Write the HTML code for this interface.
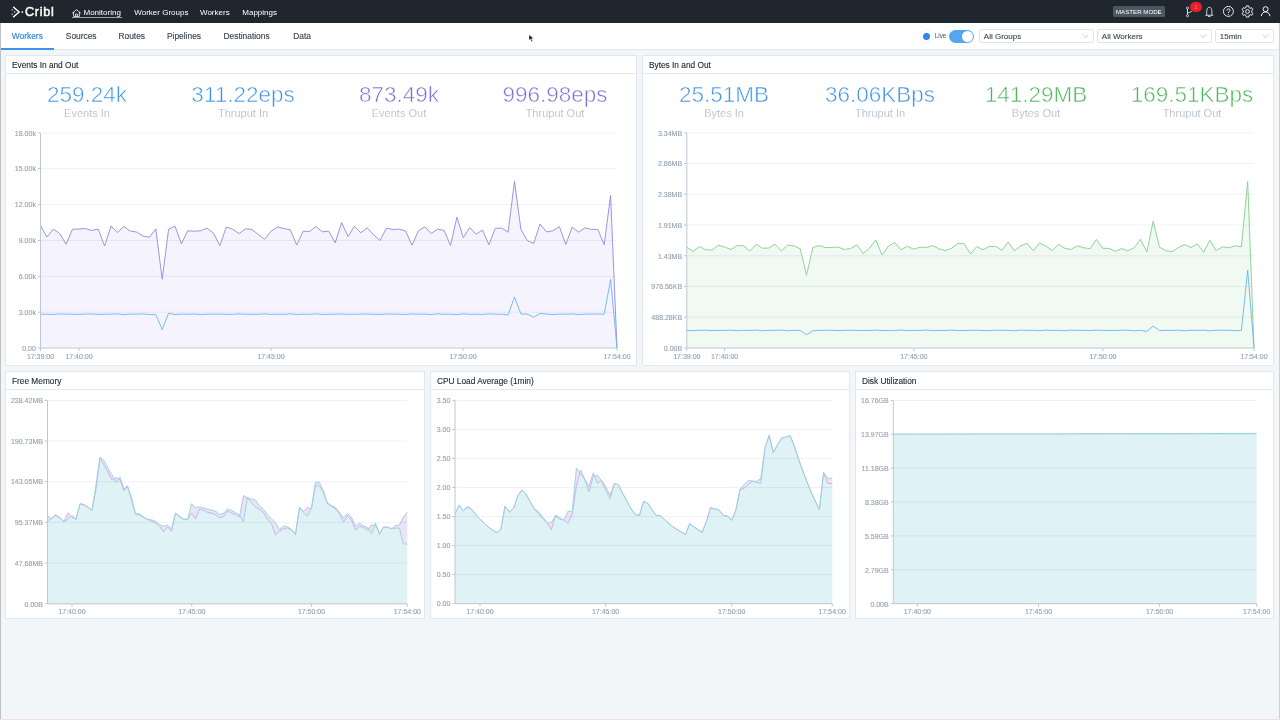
<!DOCTYPE html>
<html lang="en">
<head>
<meta charset="utf-8">
<title>Cribl - Monitoring</title>
<style>
html,body{margin:0;padding:0;}
body{width:1280px;height:720px;overflow:hidden;position:relative;background:#f3f6f8;font-family:"Liberation Sans",Arial,sans-serif;color:#2b3540;}
.abs{position:absolute;white-space:nowrap;}
#nav{position:absolute;left:0;top:0;width:1280px;height:23px;background:#1f262e;}
#nav .t{position:absolute;top:7.5px;font-size:8px;line-height:10px;color:#fff;white-space:nowrap;}
#tabs{position:absolute;left:0;top:23px;width:1280px;height:26px;background:#fff;border-bottom:1px solid #e2e8ed;}
#tabs .t{position:absolute;top:7.7px;font-size:8.4px;line-height:11px;color:#3d4753;white-space:nowrap;-webkit-text-stroke:0.15px currentColor;}
.panel{position:absolute;background:#fff;border:1px solid #e1e7ed;box-sizing:border-box;}
.panel .hd{position:absolute;left:0;top:0;right:0;height:17px;border-bottom:1px solid #e3e9ee;}
.panel .hd span{position:absolute;left:6px;top:3.5px;font-size:8.3px;-webkit-text-stroke:0.12px currentColor;line-height:11px;color:#222b34;white-space:nowrap;}
.stat{position:absolute;width:156px;text-align:center;white-space:nowrap;}
.stat .n{position:absolute;left:0;width:156px;top:82px;font-size:22.5px;line-height:26px;-webkit-text-stroke:0.55px #fff;}
.stat .l{position:absolute;left:0;width:156px;top:106px;font-size:11px;line-height:14px;color:#b0bcc9;-webkit-text-stroke:0.12px #fff;}
.blue{color:#3f93e6;}
.purple{color:#7a6fd6;}
.green{color:#4fb75c;}
.sel{position:absolute;top:29px;height:14px;box-sizing:border-box;border:1px solid #dfe5eb;border-radius:2px;background:#fff;}
.sel span{position:absolute;left:3.8px;top:2px;font-size:8px;-webkit-text-stroke:0.12px currentColor;line-height:10px;color:#3d4753;white-space:nowrap;}
.sel svg{position:absolute;right:4px;top:4px;}
svg.charts{position:absolute;left:0;top:0;}
svg.charts text{stroke:#93a1b1;stroke-width:0.12px;}
</style>
</head>
<body>
<div id="wrap" style="position:absolute;left:0;top:0;width:1280px;height:720px;will-change:transform;">
<!-- top navigation -->
<div id="nav">
  <svg class="abs" style="left:11px;top:6.2px" width="14" height="12" viewBox="0 0 14 12">
    <path d="M2.6 1.2 L8.2 6 L2.6 10.8" fill="none" stroke="#fff" stroke-width="1.5" stroke-linecap="round" stroke-linejoin="round"/>
    <circle cx="1.2" cy="3.9" r="0.7" fill="#fff"/><circle cx="1.2" cy="8.1" r="0.7" fill="#fff"/><circle cx="3.6" cy="6" r="0.7" fill="#fff"/>
    <circle cx="11.3" cy="6.1" r="0.9" fill="#fff"/>
  </svg>
  <div class="abs" id="logo" style="left:25px;top:5.3px;font-size:12.6px;line-height:15px;color:#fff;letter-spacing:0.75px;-webkit-text-stroke:0.45px #fff;">Cribl</div>
  <svg class="abs" style="left:72px;top:9px" width="9" height="8" viewBox="0 0 9 8">
    <path d="M0.5 4 L4.5 0.7 L8.5 4 M1.6 3.4 V7.4 H7.4 V3.4 M3.6 7.4 V5 H5.4 V7.4" fill="none" stroke="#fff" stroke-width="0.8" stroke-linejoin="round" stroke-linecap="round"/>
  </svg>
  <div class="t" id="n1" style="left:83.5px;">Monitoring</div>
  <div class="abs" style="left:72px;top:17px;width:50px;height:1px;background:#9ea4aa;"></div>
  <div class="t" id="n2" style="left:134.3px;">Worker Groups</div>
  <div class="t" id="n3" style="left:200px;">Workers</div>
  <div class="t" id="n4" style="left:242.3px;">Mappings</div>

  <div class="abs" style="left:1113px;top:6px;width:52px;height:11px;background:#4b5863;border-radius:1.5px;"></div>
  <div class="abs" id="mm" style="left:1116px;top:7.5px;font-size:6.15px;line-height:8px;color:#fff;">MASTER MODE</div>

  <!-- branch icon -->
  <svg class="abs" style="left:1184px;top:5px" width="12" height="13" viewBox="0 0 12 13">
    <path d="M3.5 4 V9.8 M3.5 7.9 C5.5 7.6 7 7 8.6 5.6" fill="none" stroke="#e6e8ea" stroke-width="0.9"/>
    <circle cx="3.5" cy="3" r="1.05" fill="#1f262e" stroke="#e6e8ea" stroke-width="0.8"/>
    <circle cx="3.5" cy="10.7" r="1.05" fill="#1f262e" stroke="#e6e8ea" stroke-width="0.8"/>
  </svg>
  <div class="abs" style="left:1190.2px;top:1.5px;width:11.6px;height:10.4px;border-radius:5.2px;background:#ee1c26;"></div>
  <div class="abs" style="left:1194.3px;top:3.6px;font-size:6px;line-height:7px;color:#f4878c;">1</div>
  <!-- bell -->
  <svg class="abs" style="left:1204px;top:5px" width="11" height="13" viewBox="0 0 11 13">
    <path d="M2.7 10 V6.4 C2.7 3.6 3.9 2.3 5.3 2.3 C6.7 2.3 7.9 3.6 7.9 6.4 V10 M1.8 10.3 H8.8 M4.5 11.5 H6.1" fill="none" stroke="#eceef0" stroke-width="0.85" stroke-linecap="round"/>
  </svg>
  <!-- help -->
  <svg class="abs" style="left:1222px;top:5.4px" width="13" height="13" viewBox="0 0 13 13">
    <circle cx="6.4" cy="6.4" r="5" fill="none" stroke="#fff" stroke-width="0.9"/>
    <path d="M4.8 5.2 C4.8 3.3 8 3.3 8 5.2 C8 6.3 6.4 6.3 6.4 7.6" fill="none" stroke="#fff" stroke-width="0.9" stroke-linecap="round"/>
    <circle cx="6.4" cy="9.2" r="0.55" fill="#fff"/>
  </svg>
  <!-- gear -->
  <svg class="abs" style="left:1241.1px;top:5.35px" width="13" height="13" viewBox="0 0 13 13">
    <path d="M7.94 2.55 L7.69 0.92 L5.31 0.92 L5.06 2.55 L3.80 3.28 L2.26 2.69 L1.08 4.74 L2.36 5.77 L2.36 7.23 L1.08 8.26 L2.26 10.31 L3.80 9.72 L5.06 10.45 L5.31 12.08 L7.69 12.08 L7.94 10.45 L9.20 9.72 L10.74 10.31 L11.92 8.26 L10.64 7.23 L10.64 5.77 L11.92 4.74 L10.74 2.69 L9.20 3.28 Z" fill="none" stroke="#fff" stroke-width="0.9" stroke-linejoin="round"/>
    <circle cx="6.5" cy="6.5" r="1.9" fill="none" stroke="#fff" stroke-width="0.9"/>
  </svg>
  <!-- user -->
  <svg class="abs" style="left:1260px;top:5.4px" width="12" height="13" viewBox="0 0 12 13">
    <circle cx="5.6" cy="4.2" r="2.5" fill="none" stroke="#fff" stroke-width="0.95"/>
    <path d="M1.3 10.8 C1.9 7.9 3.6 6.9 5.6 6.9 C7.6 6.9 9.3 7.9 9.9 10.8" fill="none" stroke="#fff" stroke-width="0.95" stroke-linecap="round"/>
  </svg>
</div>

<!-- tab bar -->
<div id="tabs">
  <div class="t" id="t1" style="left:11.8px;color:#2a85e4;">Workers</div>
  <div class="t" id="t2" style="left:65.8px;">Sources</div>
  <div class="t" id="t3" style="left:118.5px;">Routes</div>
  <div class="t" id="t4" style="left:167px;">Pipelines</div>
  <div class="t" id="t5" style="left:223.5px;">Destinations</div>
  <div class="t" id="t6" style="left:293.3px;">Data</div>
  <div class="abs" style="left:0;top:24.5px;width:54px;height:2px;background:#3c94ec;"></div>
</div>
<div class="abs" style="left:919.5px;top:29px;width:14px;height:14px;border-radius:50%;border:1px solid #f0f5fa;box-sizing:border-box;"></div>
<div class="abs" style="left:923.2px;top:32.8px;width:6.8px;height:6.8px;border-radius:50%;background:#2f86ee;"></div>
<div class="abs" id="live" style="left:934.7px;top:31px;font-size:6.4px;line-height:9px;color:#4a5560;">Live</div>
<div class="abs" style="left:948.5px;top:29.7px;width:25px;height:13px;border-radius:6.5px;background:#55a6ef;"></div>
<div class="abs" style="left:961.5px;top:30.7px;width:11px;height:11px;border-radius:50%;background:#fff;"></div>
<div class="sel" style="left:979px;width:115px;"><span>All Groups</span><svg width="7" height="5" viewBox="0 0 7 5"><path d="M0.9 0.6 L3.5 3.9 L6.1 0.6" fill="none" stroke="#b4bcc5" stroke-width="0.7"/></svg></div>
<div class="sel" style="left:1097px;width:115px;"><span>All Workers</span><svg width="7" height="5" viewBox="0 0 7 5"><path d="M0.9 0.6 L3.5 3.9 L6.1 0.6" fill="none" stroke="#b4bcc5" stroke-width="0.7"/></svg></div>
<div class="sel" style="left:1215px;width:59px;"><span>15min</span><svg width="7" height="5" viewBox="0 0 7 5"><path d="M0.9 0.6 L3.5 3.9 L6.1 0.6" fill="none" stroke="#b4bcc5" stroke-width="0.7"/></svg></div>

<!-- cursor -->
<svg class="abs" style="left:528px;top:34px" width="8" height="10" viewBox="0 0 8 10"><path d="M1 0.8 V6.2 L2.4 5 L3.6 7.8 L4.6 7.3 L3.4 4.7 L5.6 4.6 Z" fill="#111" stroke="#fff" stroke-width="0.4"/></svg>

<!-- panels -->
<div class="panel" style="left:5px;top:55px;width:632px;height:311px;"><div class="hd"><span>Events In and Out</span></div></div>
<div class="panel" style="left:642px;top:55px;width:632px;height:311px;"><div class="hd"><span>Bytes In and Out</span></div></div>
<div class="panel" style="left:5px;top:371px;width:420px;height:248px;"><div class="hd"><span>Free Memory</span></div></div>
<div class="panel" style="left:430px;top:371px;width:420px;height:248px;"><div class="hd"><span>CPU Load Average (1min)</span></div></div>
<div class="panel" style="left:855px;top:371px;width:419px;height:248px;"><div class="hd"><span>Disk Utilization</span></div></div>

<!-- stats -->
<div class="stat" style="left:9px;top:0"><div class="n blue">259.24k</div><div class="l">Events In</div></div>
<div class="stat" style="left:165px;top:0"><div class="n blue">311.22eps</div><div class="l">Thruput In</div></div>
<div class="stat" style="left:321px;top:0"><div class="n purple">873.49k</div><div class="l">Events Out</div></div>
<div class="stat" style="left:477px;top:0"><div class="n purple">996.98eps</div><div class="l">Thruput Out</div></div>
<div class="stat" style="left:646px;top:0"><div class="n blue">25.51MB</div><div class="l">Bytes In</div></div>
<div class="stat" style="left:802px;top:0"><div class="n blue">36.06KBps</div><div class="l">Thruput In</div></div>
<div class="stat" style="left:958px;top:0"><div class="n green">141.29MB</div><div class="l">Bytes Out</div></div>
<div class="stat" style="left:1114px;top:0"><div class="n green">169.51KBps</div><div class="l">Thruput Out</div></div>

<svg class="charts" width="1280" height="720" viewBox="0 0 1280 720">
<defs><pattern id="hatch" width="2" height="2" patternUnits="userSpaceOnUse"><rect width="2" height="2" fill="#e6dff3"/><rect width="1" height="1" fill="#efeaf8"/><rect x="1" y="1" width="1" height="1" fill="#efeaf8"/></pattern></defs>
<g font-family="'Liberation Sans', Arial, sans-serif" font-size="7" fill="#93a1b1">
<path d="M40.5 225.5 L46.9 237 L53.3 229.2 L59.7 233.5 L66.1 244.2 L72.5 229.2 L78.9 229 L85.3 228.5 L91.7 230.5 L98.2 229 L104.6 246 L111 226 L117.4 232.5 L123.8 226.5 L130.2 231 L136.6 232 L143 236 L149.4 237.2 L155.8 228.8 L162.2 279.2 L168.6 229.2 L175 226.2 L181.4 243.8 L187.8 230.8 L194.2 231.2 L200.6 230.8 L207 228.2 L213.4 233 L219.9 245.5 L226.3 227 L232.7 229.2 L239.1 233.5 L245.5 228.8 L251.9 229.5 L258.3 234.5 L264.7 239.2 L271.1 231.2 L277.5 227 L283.9 228.5 L290.3 229.8 L296.7 245 L303.1 231.2 L309.5 231.5 L315.9 226.5 L322.3 231.8 L328.8 231.2 L335.2 242.8 L341.6 222.5 L348 236.5 L354.4 226.2 L360.8 232.8 L367.2 227.8 L373.6 234.8 L380 240.5 L386.4 228.2 L392.8 229.5 L399.2 229.2 L405.6 231 L412 245.2 L418.4 230.8 L424.8 226.8 L431.2 233.5 L437.6 229.2 L444.1 230.5 L450.5 245.3 L456.9 217.2 L463.3 237.5 L469.7 227.5 L476.1 234.2 L482.5 230 L488.9 244.7 L495.3 228.3 L501.7 228.1 L508.1 232.2 L514.5 181.4 L520.9 229.4 L527.3 240.6 L533.7 243.3 L540.1 223.9 L546.5 231.9 L552.9 230.8 L559.4 226.7 L565.8 244.4 L572.2 227.2 L578.6 232.2 L585 227.8 L591.4 229.4 L597.8 229.4 L604.2 244.7 L610.6 195.3 L617 348 L617 348 L40.5 348 Z" fill="#f5f3fe"/>
<line x1="40.5" y1="312.2" x2="617" y2="312.2" stroke="rgba(30,50,80,0.07)" stroke-width="1"/><line x1="40.5" y1="276.3" x2="617" y2="276.3" stroke="rgba(30,50,80,0.07)" stroke-width="1"/><line x1="40.5" y1="240.5" x2="617" y2="240.5" stroke="rgba(30,50,80,0.07)" stroke-width="1"/><line x1="40.5" y1="204.6" x2="617" y2="204.6" stroke="rgba(30,50,80,0.07)" stroke-width="1"/><line x1="40.5" y1="168.6" x2="617" y2="168.6" stroke="rgba(30,50,80,0.07)" stroke-width="1"/><line x1="40.5" y1="133" x2="617" y2="133" stroke="rgba(30,50,80,0.07)" stroke-width="1"/>
<path d="M40.5 225.5 L46.9 237 L53.3 229.2 L59.7 233.5 L66.1 244.2 L72.5 229.2 L78.9 229 L85.3 228.5 L91.7 230.5 L98.2 229 L104.6 246 L111 226 L117.4 232.5 L123.8 226.5 L130.2 231 L136.6 232 L143 236 L149.4 237.2 L155.8 228.8 L162.2 279.2 L168.6 229.2 L175 226.2 L181.4 243.8 L187.8 230.8 L194.2 231.2 L200.6 230.8 L207 228.2 L213.4 233 L219.9 245.5 L226.3 227 L232.7 229.2 L239.1 233.5 L245.5 228.8 L251.9 229.5 L258.3 234.5 L264.7 239.2 L271.1 231.2 L277.5 227 L283.9 228.5 L290.3 229.8 L296.7 245 L303.1 231.2 L309.5 231.5 L315.9 226.5 L322.3 231.8 L328.8 231.2 L335.2 242.8 L341.6 222.5 L348 236.5 L354.4 226.2 L360.8 232.8 L367.2 227.8 L373.6 234.8 L380 240.5 L386.4 228.2 L392.8 229.5 L399.2 229.2 L405.6 231 L412 245.2 L418.4 230.8 L424.8 226.8 L431.2 233.5 L437.6 229.2 L444.1 230.5 L450.5 245.3 L456.9 217.2 L463.3 237.5 L469.7 227.5 L476.1 234.2 L482.5 230 L488.9 244.7 L495.3 228.3 L501.7 228.1 L508.1 232.2 L514.5 181.4 L520.9 229.4 L527.3 240.6 L533.7 243.3 L540.1 223.9 L546.5 231.9 L552.9 230.8 L559.4 226.7 L565.8 244.4 L572.2 227.2 L578.6 232.2 L585 227.8 L591.4 229.4 L597.8 229.4 L604.2 244.7 L610.6 195.3 L617 348" fill="none" stroke="#9289de" stroke-width="0.9" stroke-linejoin="round"/>
<path d="M40.5 314.2 L46.9 314.2 L53.3 314.5 L59.7 313.9 L66.1 314.1 L72.5 314.3 L78.9 314.4 L85.3 314 L91.7 314 L98.2 314.4 L104.6 314.3 L111 314.1 L117.4 313.9 L123.8 314.6 L130.2 314.1 L136.6 314.2 L143 313.9 L149.4 314.6 L155.8 314.6 L162.2 329.6 L168.6 313.2 L175 314.6 L181.4 314.1 L187.8 314.2 L194.2 314 L200.6 314.5 L207 314.2 L213.4 314.1 L219.9 314.1 L226.3 314.4 L232.7 314.3 L239.1 313.9 L245.5 314.3 L251.9 314.3 L258.3 314.3 L264.7 313.8 L271.1 314.4 L277.5 314.2 L283.9 314.4 L290.3 313.8 L296.7 314.5 L303.1 314.2 L309.5 314.4 L315.9 313.8 L322.3 314.5 L328.8 314.2 L335.2 314.3 L341.6 313.9 L348 314.4 L354.4 314.3 L360.8 314.1 L367.2 314 L373.6 314.3 L380 314.4 L386.4 314 L392.8 314.1 L399.2 314.2 L405.6 314.5 L412 313.9 L418.4 314.2 L424.8 314.1 L431.2 314.6 L437.6 313.8 L444.1 314.3 L450.5 314.2 L456.9 314.6 L463.3 313.8 L469.7 314.3 L476.1 314.2 L482.5 314.5 L488.9 313.9 L495.3 314.2 L501.7 314.3 L508.1 315 L514.5 297 L520.9 313.9 L527.3 314.2 L533.7 317.2 L540.1 313.4 L546.5 314 L552.9 314.6 L559.4 314.1 L565.8 314.2 L572.2 313.9 L578.6 314.6 L585 314 L591.4 314.2 L597.8 314 L604.2 314.2 L610.6 279.4 L617 348" fill="none" stroke="#6bb5ef" stroke-width="0.9" stroke-linejoin="round"/>
<path d="M40.5 133 V348 H617" fill="none" stroke="#bcc8d6" stroke-width="1"/><line x1="37.8" y1="348" x2="40.5" y2="348" stroke="#bcc8d6" stroke-width="1"/><text x="35.9" y="350.8" text-anchor="end">0.00</text><line x1="37.8" y1="312.2" x2="40.5" y2="312.2" stroke="#bcc8d6" stroke-width="1"/><text x="35.9" y="314.9" text-anchor="end">3.00k</text><line x1="37.8" y1="276.3" x2="40.5" y2="276.3" stroke="#bcc8d6" stroke-width="1"/><text x="35.9" y="279.1" text-anchor="end">6.00k</text><line x1="37.8" y1="240.5" x2="40.5" y2="240.5" stroke="#bcc8d6" stroke-width="1"/><text x="35.9" y="243.2" text-anchor="end">9.00k</text><line x1="37.8" y1="204.6" x2="40.5" y2="204.6" stroke="#bcc8d6" stroke-width="1"/><text x="35.9" y="207.3" text-anchor="end">12.00k</text><line x1="37.8" y1="168.6" x2="40.5" y2="168.6" stroke="#bcc8d6" stroke-width="1"/><text x="35.9" y="171.3" text-anchor="end">15.00k</text><line x1="37.8" y1="133" x2="40.5" y2="133" stroke="#bcc8d6" stroke-width="1"/><text x="35.9" y="135.8" text-anchor="end">18.00k</text><line x1="40.5" y1="348" x2="40.5" y2="351" stroke="#bcc8d6" stroke-width="1"/><text x="40.5" y="358.5" text-anchor="middle">17:39:00</text><line x1="79" y1="348" x2="79" y2="351" stroke="#bcc8d6" stroke-width="1"/><text x="79" y="358.5" text-anchor="middle">17:40:00</text><line x1="271" y1="348" x2="271" y2="351" stroke="#bcc8d6" stroke-width="1"/><text x="271" y="358.5" text-anchor="middle">17:45:00</text><line x1="463" y1="348" x2="463" y2="351" stroke="#bcc8d6" stroke-width="1"/><text x="463" y="358.5" text-anchor="middle">17:50:00</text><line x1="617" y1="348" x2="617" y2="351" stroke="#bcc8d6" stroke-width="1"/><text x="617" y="358.5" text-anchor="middle">17:54:00</text>
<path d="M686.8 247 L693.1 251.5 L699.4 246.5 L705.7 249.8 L712 250 L718.3 245.2 L724.6 247 L730.9 249.5 L737.2 245.5 L743.5 245.8 L749.8 251.2 L756.1 244.2 L762.4 248.2 L768.7 248 L775 244.2 L781.3 251 L787.6 245 L793.9 246 L800.2 248.8 L806.5 275.2 L812.8 247.5 L819.1 245.5 L825.4 247.5 L831.7 247.5 L838 247 L844.3 249.5 L850.6 248.5 L856.9 244.8 L863.2 253.5 L869.5 248 L875.8 240 L882.1 255 L888.4 246.2 L894.7 242.5 L901 249.8 L907.3 246.2 L913.6 249.2 L920 247.2 L926.3 247.5 L932.6 245.5 L938.9 248.8 L945.2 250.6 L951.5 248.3 L957.8 243.6 L964.1 243.6 L970.4 253.9 L976.7 246.7 L983 249.7 L989.3 246.4 L995.6 246.4 L1001.9 250.3 L1008.2 242.2 L1014.5 250.8 L1020.8 245.8 L1027.1 243.3 L1033.4 250.8 L1039.7 243.1 L1046 246.1 L1052.3 250.6 L1058.6 244.4 L1064.9 248.3 L1071.2 249.4 L1077.5 245.8 L1083.8 247.8 L1090.1 248.6 L1096.4 239.4 L1102.7 248.3 L1109 248.3 L1115.3 251.4 L1121.6 248.6 L1127.9 250.8 L1134.2 247.8 L1140.5 239.4 L1146.9 251.9 L1153.2 221.1 L1159.5 247.2 L1165.8 250.6 L1172.1 251.7 L1178.4 247.5 L1184.7 244.7 L1191 247.5 L1197.3 243.9 L1203.6 252.2 L1209.9 240.3 L1216.2 250.6 L1222.5 246.9 L1228.8 247.8 L1235.1 245.8 L1241.4 246.7 L1247.7 181.4 L1254 348 L1254 348 L686.8 348 Z" fill="#f0f9f2"/>
<line x1="686.8" y1="317.2" x2="1254" y2="317.2" stroke="rgba(30,50,80,0.07)" stroke-width="1"/><line x1="686.8" y1="286.5" x2="1254" y2="286.5" stroke="rgba(30,50,80,0.07)" stroke-width="1"/><line x1="686.8" y1="255.8" x2="1254" y2="255.8" stroke="rgba(30,50,80,0.07)" stroke-width="1"/><line x1="686.8" y1="225" x2="1254" y2="225" stroke="rgba(30,50,80,0.07)" stroke-width="1"/><line x1="686.8" y1="194.2" x2="1254" y2="194.2" stroke="rgba(30,50,80,0.07)" stroke-width="1"/><line x1="686.8" y1="163.5" x2="1254" y2="163.5" stroke="rgba(30,50,80,0.07)" stroke-width="1"/><line x1="686.8" y1="132.8" x2="1254" y2="132.8" stroke="rgba(30,50,80,0.07)" stroke-width="1"/>
<path d="M686.8 247 L693.1 251.5 L699.4 246.5 L705.7 249.8 L712 250 L718.3 245.2 L724.6 247 L730.9 249.5 L737.2 245.5 L743.5 245.8 L749.8 251.2 L756.1 244.2 L762.4 248.2 L768.7 248 L775 244.2 L781.3 251 L787.6 245 L793.9 246 L800.2 248.8 L806.5 275.2 L812.8 247.5 L819.1 245.5 L825.4 247.5 L831.7 247.5 L838 247 L844.3 249.5 L850.6 248.5 L856.9 244.8 L863.2 253.5 L869.5 248 L875.8 240 L882.1 255 L888.4 246.2 L894.7 242.5 L901 249.8 L907.3 246.2 L913.6 249.2 L920 247.2 L926.3 247.5 L932.6 245.5 L938.9 248.8 L945.2 250.6 L951.5 248.3 L957.8 243.6 L964.1 243.6 L970.4 253.9 L976.7 246.7 L983 249.7 L989.3 246.4 L995.6 246.4 L1001.9 250.3 L1008.2 242.2 L1014.5 250.8 L1020.8 245.8 L1027.1 243.3 L1033.4 250.8 L1039.7 243.1 L1046 246.1 L1052.3 250.6 L1058.6 244.4 L1064.9 248.3 L1071.2 249.4 L1077.5 245.8 L1083.8 247.8 L1090.1 248.6 L1096.4 239.4 L1102.7 248.3 L1109 248.3 L1115.3 251.4 L1121.6 248.6 L1127.9 250.8 L1134.2 247.8 L1140.5 239.4 L1146.9 251.9 L1153.2 221.1 L1159.5 247.2 L1165.8 250.6 L1172.1 251.7 L1178.4 247.5 L1184.7 244.7 L1191 247.5 L1197.3 243.9 L1203.6 252.2 L1209.9 240.3 L1216.2 250.6 L1222.5 246.9 L1228.8 247.8 L1235.1 245.8 L1241.4 246.7 L1247.7 181.4 L1254 348" fill="none" stroke="#82cf8b" stroke-width="0.9" stroke-linejoin="round"/>
<path d="M686.8 330.5 L693.1 330.6 L699.4 330.3 L705.7 330.2 L712 330.6 L718.3 330.4 L724.6 330.4 L730.9 330.2 L737.2 330.7 L743.5 330.3 L749.8 330.4 L756.1 330.1 L762.4 330.8 L768.7 330.3 L775 330.4 L781.3 330.1 L787.6 330.8 L793.9 330.3 L800.2 330.4 L806.5 334.8 L812.8 330.7 L819.1 330.4 L825.4 330.3 L831.7 330.3 L838 330.6 L844.3 330.4 L850.6 330.2 L856.9 330.5 L863.2 330.5 L869.5 330.5 L875.8 330.1 L882.1 330.6 L888.4 330.4 L894.7 330.6 L901 330 L907.3 330.6 L913.6 330.4 L920 330.5 L926.3 330 L932.6 330.6 L938.9 330.4 L945.2 330.5 L951.5 330.1 L957.8 330.6 L964.1 330.5 L970.4 330.4 L976.7 330.2 L983 330.5 L989.3 330.6 L995.6 330.2 L1001.9 330.3 L1008.2 330.4 L1014.5 330.7 L1020.8 330.1 L1027.1 330.4 L1033.4 330.3 L1039.7 330.7 L1046 330.1 L1052.3 330.5 L1058.6 330.4 L1064.9 330.7 L1071.2 330.1 L1077.5 330.4 L1083.8 330.4 L1090.1 330.6 L1096.4 330.1 L1102.7 330.4 L1109 330.5 L1115.3 330.5 L1121.6 330.2 L1127.9 330.3 L1134.2 330.7 L1140.5 330.4 L1146.9 331.4 L1153.2 326.1 L1159.5 330.6 L1165.8 330.3 L1172.1 330.4 L1178.4 330.2 L1184.7 330.8 L1191 330.2 L1197.3 330.4 L1203.6 330.2 L1209.9 330.8 L1216.2 330.2 L1222.5 330.3 L1228.8 330.3 L1235.1 330.7 L1241.4 330.3 L1247.7 270.3 L1254 348" fill="none" stroke="#6bb5ef" stroke-width="0.9" stroke-linejoin="round"/>
<path d="M686.8 132.8 V348 H1254" fill="none" stroke="#bcc8d6" stroke-width="1"/><line x1="684" y1="348" x2="686.8" y2="348" stroke="#bcc8d6" stroke-width="1"/><text x="682.1" y="350.8" text-anchor="end">0.00B</text><line x1="684" y1="317.2" x2="686.8" y2="317.2" stroke="#bcc8d6" stroke-width="1"/><text x="682.1" y="320" text-anchor="end">488.28KB</text><line x1="684" y1="286.5" x2="686.8" y2="286.5" stroke="#bcc8d6" stroke-width="1"/><text x="682.1" y="289.2" text-anchor="end">976.56KB</text><line x1="684" y1="255.8" x2="686.8" y2="255.8" stroke="#bcc8d6" stroke-width="1"/><text x="682.1" y="258.5" text-anchor="end">1.43MB</text><line x1="684" y1="225" x2="686.8" y2="225" stroke="#bcc8d6" stroke-width="1"/><text x="682.1" y="227.8" text-anchor="end">1.91MB</text><line x1="684" y1="194.2" x2="686.8" y2="194.2" stroke="#bcc8d6" stroke-width="1"/><text x="682.1" y="197" text-anchor="end">2.38MB</text><line x1="684" y1="163.5" x2="686.8" y2="163.5" stroke="#bcc8d6" stroke-width="1"/><text x="682.1" y="166.2" text-anchor="end">2.86MB</text><line x1="684" y1="132.8" x2="686.8" y2="132.8" stroke="#bcc8d6" stroke-width="1"/><text x="682.1" y="135.5" text-anchor="end">3.34MB</text><line x1="686.8" y1="348" x2="686.8" y2="351" stroke="#bcc8d6" stroke-width="1"/><text x="686.8" y="358.5" text-anchor="middle">17:39:00</text><line x1="724.6" y1="348" x2="724.6" y2="351" stroke="#bcc8d6" stroke-width="1"/><text x="724.6" y="358.5" text-anchor="middle">17:40:00</text><line x1="913.8" y1="348" x2="913.8" y2="351" stroke="#bcc8d6" stroke-width="1"/><text x="913.8" y="358.5" text-anchor="middle">17:45:00</text><line x1="1102.8" y1="348" x2="1102.8" y2="351" stroke="#bcc8d6" stroke-width="1"/><text x="1102.8" y="358.5" text-anchor="middle">17:50:00</text><line x1="1254" y1="348" x2="1254" y2="351" stroke="#bcc8d6" stroke-width="1"/><text x="1254" y="358.5" text-anchor="middle">17:54:00</text>
<path d="M47.5 521.2 L51.5 518.2 L55.5 514.5 L60 517.8 L64 521.5 L68 519.5 L72 515.5 L76 519 L80 503.5 L84 504.5 L88 507 L92 510 L96 485 L100 457 L104 460.5 L108 468 L112 475 L116 482.5 L120 477 L124 488.8 L127.5 485.8 L131.5 497.5 L135.5 513.8 L139.5 513.8 L143.5 516.8 L147.5 519.2 L151.5 519.8 L155.5 521.2 L159.5 524.5 L163.5 526.2 L167.5 525.2 L171.5 528.8 L175.5 513 L179.5 516.2 L183.5 518.8 L187.5 519.5 L191.5 503.8 L195.5 507.5 L199.5 506.8 L204 508.2 L208 509.2 L212 510.2 L216 511.5 L220 514.5 L224 513 L227.5 509 L231.5 510.5 L235.5 512.5 L239.5 515 L243.5 521.8 L247.5 497.5 L251.5 499 L255.5 500 L259.5 506.2 L263.5 509.2 L267.5 515 L271.5 518.8 L275.5 522.5 L279.5 529.5 L283.5 526.2 L287.5 526.8 L291.5 529.5 L295.5 535 L299.5 507 L303.5 512.5 L307.5 516.2 L311.5 507.5 L315.5 482 L319.5 482.5 L323.5 491.2 L327.5 503 L331.5 505.5 L335.5 507.5 L339.5 512.5 L343.5 518 L347.5 513.5 L351.5 517.5 L355.5 526.2 L359.5 523 L363.5 526.2 L367.5 527.5 L371.5 533.8 L375.5 523 L379.5 534.5 L383.5 527 L387.5 527 L391.5 528.5 L395.5 528.2 L399.5 528 L403 543.8 L407.2 544.2 L407.2 603.8 L47.5 603.8 Z" fill="#dff2f6"/><path d="M47.5 515.8 L51.5 519 L55.5 515.5 L60 518.2 L64 521.5 L68 512.8 L72 517 L76 519.5 L80 504 L84 505 L88 507.5 L92 510.5 L96 488.8 L100 458 L104 465 L108 472.5 L112 480 L116 477.5 L120 480 L124 490.8 L127.5 486.2 L131.5 500 L135.5 514 L139.5 515 L143.5 517.5 L147.5 519.5 L151.5 521.2 L155.5 523.2 L159.5 526.2 L163.5 531.8 L167.5 526.8 L171.5 531.2 L175.5 513.5 L179.5 517 L183.5 519.2 L187.5 519.8 L191.5 513.2 L195.5 518.8 L199.5 509.2 L204 510.5 L208 512.5 L212 513.2 L216 515 L220 518 L224 516.2 L227.5 511.2 L231.5 513 L235.5 514.5 L239.5 517 L243.5 495.5 L247.5 498 L251.5 502.5 L255.5 507 L259.5 509.5 L263.5 512.5 L267.5 519.5 L271.5 523.8 L275.5 535 L279.5 531.2 L283.5 528.8 L287.5 528 L291.5 530 L295.5 533.8 L299.5 507.5 L303.5 511.2 L307.5 507.5 L311.5 508.8 L315.5 485 L319.5 486.2 L323.5 492.5 L327.5 503.8 L331.5 506.2 L335.5 508.8 L339.5 513.8 L343.5 522 L347.5 516.2 L351.5 520 L355.5 530 L359.5 526.2 L363.5 527.5 L367.5 530 L371.5 525 L375.5 525 L379.5 533.8 L383.5 527 L387.5 527.5 L391.5 528.8 L395.5 525.8 L399.5 525 L403 517.5 L407.2 512.5 L407.2 603.8 L47.5 603.8 Z" fill="#dff2f6"/><path d="M47.5 521.2 L51.5 518.2 L55.5 514.5 L60 517.8 L64 521.5 L68 519.5 L72 515.5 L76 519 L80 503.5 L84 504.5 L88 507 L92 510 L96 485 L100 457 L104 460.5 L108 468 L112 475 L116 482.5 L120 477 L124 488.8 L127.5 485.8 L131.5 497.5 L135.5 513.8 L139.5 513.8 L143.5 516.8 L147.5 519.2 L151.5 519.8 L155.5 521.2 L159.5 524.5 L163.5 526.2 L167.5 525.2 L171.5 528.8 L175.5 513 L179.5 516.2 L183.5 518.8 L187.5 519.5 L191.5 503.8 L195.5 507.5 L199.5 506.8 L204 508.2 L208 509.2 L212 510.2 L216 511.5 L220 514.5 L224 513 L227.5 509 L231.5 510.5 L235.5 512.5 L239.5 515 L243.5 521.8 L247.5 497.5 L251.5 499 L255.5 500 L259.5 506.2 L263.5 509.2 L267.5 515 L271.5 518.8 L275.5 522.5 L279.5 529.5 L283.5 526.2 L287.5 526.8 L291.5 529.5 L295.5 535 L299.5 507 L303.5 512.5 L307.5 516.2 L311.5 507.5 L315.5 482 L319.5 482.5 L323.5 491.2 L327.5 503 L331.5 505.5 L335.5 507.5 L339.5 512.5 L343.5 518 L347.5 513.5 L351.5 517.5 L355.5 526.2 L359.5 523 L363.5 526.2 L367.5 527.5 L371.5 533.8 L375.5 523 L379.5 534.5 L383.5 527 L387.5 527 L391.5 528.5 L395.5 528.2 L399.5 528 L403 543.8 L407.2 544.2 L407.2 512.5 L403 517.5 L399.5 525 L395.5 525.8 L391.5 528.8 L387.5 527.5 L383.5 527 L379.5 533.8 L375.5 525 L371.5 525 L367.5 530 L363.5 527.5 L359.5 526.2 L355.5 530 L351.5 520 L347.5 516.2 L343.5 522 L339.5 513.8 L335.5 508.8 L331.5 506.2 L327.5 503.8 L323.5 492.5 L319.5 486.2 L315.5 485 L311.5 508.8 L307.5 507.5 L303.5 511.2 L299.5 507.5 L295.5 533.8 L291.5 530 L287.5 528 L283.5 528.8 L279.5 531.2 L275.5 535 L271.5 523.8 L267.5 519.5 L263.5 512.5 L259.5 509.5 L255.5 507 L251.5 502.5 L247.5 498 L243.5 495.5 L239.5 517 L235.5 514.5 L231.5 513 L227.5 511.2 L224 516.2 L220 518 L216 515 L212 513.2 L208 512.5 L204 510.5 L199.5 509.2 L195.5 518.8 L191.5 513.2 L187.5 519.8 L183.5 519.2 L179.5 517 L175.5 513.5 L171.5 531.2 L167.5 526.8 L163.5 531.8 L159.5 526.2 L155.5 523.2 L151.5 521.2 L147.5 519.5 L143.5 517.5 L139.5 515 L135.5 514 L131.5 500 L127.5 486.2 L124 490.8 L120 480 L116 477.5 L112 480 L108 472.5 L104 465 L100 458 L96 488.8 L92 510.5 L88 507.5 L84 505 L80 504 L76 519.5 L72 517 L68 512.8 L64 521.5 L60 518.2 L55.5 515.5 L51.5 519 L47.5 515.8 Z" fill="url(#hatch)" fill-rule="evenodd"/>
<line x1="47.5" y1="563.1" x2="407.3" y2="563.1" stroke="rgba(30,50,80,0.07)" stroke-width="1"/><line x1="47.5" y1="522.4" x2="407.3" y2="522.4" stroke="rgba(30,50,80,0.07)" stroke-width="1"/><line x1="47.5" y1="481.7" x2="407.3" y2="481.7" stroke="rgba(30,50,80,0.07)" stroke-width="1"/><line x1="47.5" y1="441" x2="407.3" y2="441" stroke="rgba(30,50,80,0.07)" stroke-width="1"/><line x1="47.5" y1="400.4" x2="407.3" y2="400.4" stroke="rgba(30,50,80,0.07)" stroke-width="1"/>
<path d="M47.5 515.8 L51.5 519 L55.5 515.5 L60 518.2 L64 521.5 L68 512.8 L72 517 L76 519.5 L80 504 L84 505 L88 507.5 L92 510.5 L96 488.8 L100 458 L104 465 L108 472.5 L112 480 L116 477.5 L120 480 L124 490.8 L127.5 486.2 L131.5 500 L135.5 514 L139.5 515 L143.5 517.5 L147.5 519.5 L151.5 521.2 L155.5 523.2 L159.5 526.2 L163.5 531.8 L167.5 526.8 L171.5 531.2 L175.5 513.5 L179.5 517 L183.5 519.2 L187.5 519.8 L191.5 513.2 L195.5 518.8 L199.5 509.2 L204 510.5 L208 512.5 L212 513.2 L216 515 L220 518 L224 516.2 L227.5 511.2 L231.5 513 L235.5 514.5 L239.5 517 L243.5 495.5 L247.5 498 L251.5 502.5 L255.5 507 L259.5 509.5 L263.5 512.5 L267.5 519.5 L271.5 523.8 L275.5 535 L279.5 531.2 L283.5 528.8 L287.5 528 L291.5 530 L295.5 533.8 L299.5 507.5 L303.5 511.2 L307.5 507.5 L311.5 508.8 L315.5 485 L319.5 486.2 L323.5 492.5 L327.5 503.8 L331.5 506.2 L335.5 508.8 L339.5 513.8 L343.5 522 L347.5 516.2 L351.5 520 L355.5 530 L359.5 526.2 L363.5 527.5 L367.5 530 L371.5 525 L375.5 525 L379.5 533.8 L383.5 527 L387.5 527.5 L391.5 528.8 L395.5 525.8 L399.5 525 L403 517.5 L407.2 512.5" fill="none" stroke="#c2a8e7" stroke-width="0.8" stroke-linejoin="round"/>
<path d="M47.5 521.2 L51.5 518.2 L55.5 514.5 L60 517.8 L64 521.5 L68 519.5 L72 515.5 L76 519 L80 503.5 L84 504.5 L88 507 L92 510 L96 485 L100 457 L104 460.5 L108 468 L112 475 L116 482.5 L120 477 L124 488.8 L127.5 485.8 L131.5 497.5 L135.5 513.8 L139.5 513.8 L143.5 516.8 L147.5 519.2 L151.5 519.8 L155.5 521.2 L159.5 524.5 L163.5 526.2 L167.5 525.2 L171.5 528.8 L175.5 513 L179.5 516.2 L183.5 518.8 L187.5 519.5 L191.5 503.8 L195.5 507.5 L199.5 506.8 L204 508.2 L208 509.2 L212 510.2 L216 511.5 L220 514.5 L224 513 L227.5 509 L231.5 510.5 L235.5 512.5 L239.5 515 L243.5 521.8 L247.5 497.5 L251.5 499 L255.5 500 L259.5 506.2 L263.5 509.2 L267.5 515 L271.5 518.8 L275.5 522.5 L279.5 529.5 L283.5 526.2 L287.5 526.8 L291.5 529.5 L295.5 535 L299.5 507 L303.5 512.5 L307.5 516.2 L311.5 507.5 L315.5 482 L319.5 482.5 L323.5 491.2 L327.5 503 L331.5 505.5 L335.5 507.5 L339.5 512.5 L343.5 518 L347.5 513.5 L351.5 517.5 L355.5 526.2 L359.5 523 L363.5 526.2 L367.5 527.5 L371.5 533.8 L375.5 523 L379.5 534.5 L383.5 527 L387.5 527 L391.5 528.5 L395.5 528.2 L399.5 528 L403 543.8 L407.2 544.2" fill="none" stroke="#96d4db" stroke-width="0.9" stroke-linejoin="round"/>
<path d="M47.5 400.4 V603.8 H407.3" fill="none" stroke="#bcc8d6" stroke-width="1"/><line x1="44.8" y1="603.8" x2="47.5" y2="603.8" stroke="#bcc8d6" stroke-width="1"/><text x="42.9" y="606.5" text-anchor="end">0.00B</text><line x1="44.8" y1="563.1" x2="47.5" y2="563.1" stroke="#bcc8d6" stroke-width="1"/><text x="42.9" y="565.9" text-anchor="end">47.68MB</text><line x1="44.8" y1="522.4" x2="47.5" y2="522.4" stroke="#bcc8d6" stroke-width="1"/><text x="42.9" y="525.1" text-anchor="end">95.37MB</text><line x1="44.8" y1="481.7" x2="47.5" y2="481.7" stroke="#bcc8d6" stroke-width="1"/><text x="42.9" y="484.4" text-anchor="end">143.05MB</text><line x1="44.8" y1="441" x2="47.5" y2="441" stroke="#bcc8d6" stroke-width="1"/><text x="42.9" y="443.8" text-anchor="end">190.73MB</text><line x1="44.8" y1="400.4" x2="47.5" y2="400.4" stroke="#bcc8d6" stroke-width="1"/><text x="42.9" y="403.1" text-anchor="end">238.42MB</text><line x1="72" y1="603.8" x2="72" y2="606.8" stroke="#bcc8d6" stroke-width="1"/><text x="72" y="614.2" text-anchor="middle">17:40:00</text><line x1="191.8" y1="603.8" x2="191.8" y2="606.8" stroke="#bcc8d6" stroke-width="1"/><text x="191.8" y="614.2" text-anchor="middle">17:45:00</text><line x1="311.5" y1="603.8" x2="311.5" y2="606.8" stroke="#bcc8d6" stroke-width="1"/><text x="311.5" y="614.2" text-anchor="middle">17:50:00</text><line x1="407.3" y1="603.8" x2="407.3" y2="606.8" stroke="#bcc8d6" stroke-width="1"/><text x="407.3" y="614.2" text-anchor="middle">17:54:00</text>
<path d="M455 513.6 L459.2 505 L463.3 510.8 L467.5 507.5 L471.7 509.4 L475.8 514.4 L480 519.2 L484.2 523.3 L488.3 526.9 L492.5 530 L496.7 532.5 L500.8 529.4 L505 506.4 L509.4 512.2 L513.6 508.3 L517.8 495.6 L521.9 490 L526.1 494.2 L530.3 501.9 L534.4 508.9 L538.6 513.9 L542.8 518.6 L547.2 523.3 L551.4 522.2 L555.6 515.8 L559.7 519.4 L563.9 520 L568.1 511.1 L572.2 511.7 L576.4 468.1 L580.6 474.2 L584.7 479.7 L588.9 491.7 L593.3 476.9 L597.5 475 L601.7 481.1 L605.8 490.8 L610 499.2 L614.2 483.6 L618.3 484.7 L622.5 493.1 L626.7 500.6 L630 506.9 L635 514.4 L639.4 515.3 L643.6 501.4 L647.8 503.3 L651.9 509.4 L656.1 515.3 L660.3 515.8 L664.4 519.4 L668.6 523.3 L672.8 526.7 L676.9 529.4 L681.1 531.9 L685.6 534.4 L689.7 523.6 L693.9 526.9 L698.1 529.7 L702.2 532.2 L706.4 521.4 L710.6 507.8 L714.7 508.9 L718.9 509.7 L723.1 515.3 L727.2 515.8 L731.7 520.3 L735.8 510.3 L740 489.4 L744.2 484.4 L748.3 480.3 L752.5 481.1 L756.7 482.5 L760.8 483.3 L765 447.8 L769.2 435.3 L773.3 452.5 L777.5 445 L781.7 438.1 L785.8 437.2 L790 435.3 L794.2 445.8 L798.3 458.3 L802.5 470 L806.7 481.1 L810.8 491.4 L815 500.6 L819.4 509.4 L823.6 472.2 L827.8 478.3 L832.2 478.3 L832.2 603.6 L455 603.6 Z" fill="#dff2f6"/><path d="M455 513.6 L459.2 505 L463.3 510.8 L467.5 506.4 L471.7 509.4 L475.8 514.4 L480 519.2 L484.2 523.3 L488.3 526.9 L492.5 530 L496.7 532.5 L500.8 529.4 L505 506.4 L509.4 512.2 L513.6 508.3 L517.8 495.6 L521.9 490 L526.1 494.2 L530.3 501.9 L534.4 508.9 L538.6 511.7 L542.8 517.2 L547.2 522.8 L551.4 529.7 L555.6 515 L559.7 517.8 L563.9 520 L568.1 523.3 L572.2 514.4 L576.4 486.1 L580.6 470 L584.7 478.9 L588.9 486.7 L593.3 472.8 L597.5 483.3 L601.7 480.6 L605.8 486.7 L610 495.6 L614.2 483.6 L618.3 484.7 L622.5 493.1 L626.7 500.6 L630 506.9 L635 514.4 L639.4 515.3 L643.6 501.4 L647.8 503.3 L651.9 509.4 L656.1 515.3 L660.3 515.8 L664.4 519.4 L668.6 523.3 L672.8 526.7 L676.9 529.4 L681.1 531.9 L685.6 534.4 L689.7 523.6 L693.9 526.9 L698.1 529.7 L702.2 532.2 L706.4 521.4 L710.6 507.8 L714.7 508.9 L718.9 509.7 L723.1 515.3 L727.2 515.8 L731.7 520.3 L735.8 510.3 L740 489.4 L744.2 488.6 L748.3 484.4 L752.5 481.1 L756.7 481.4 L760.8 478.3 L765 447.8 L769.2 435.3 L773.3 452.5 L777.5 445 L781.7 438.1 L785.8 437.2 L790 435.3 L794.2 445.8 L798.3 458.3 L802.5 470 L806.7 481.1 L810.8 491.4 L815 500.6 L819.4 509.4 L823.6 473.3 L827.8 483.3 L832.2 483.6 L832.2 603.6 L455 603.6 Z" fill="#dff2f6"/><path d="M455 513.6 L459.2 505 L463.3 510.8 L467.5 507.5 L471.7 509.4 L475.8 514.4 L480 519.2 L484.2 523.3 L488.3 526.9 L492.5 530 L496.7 532.5 L500.8 529.4 L505 506.4 L509.4 512.2 L513.6 508.3 L517.8 495.6 L521.9 490 L526.1 494.2 L530.3 501.9 L534.4 508.9 L538.6 513.9 L542.8 518.6 L547.2 523.3 L551.4 522.2 L555.6 515.8 L559.7 519.4 L563.9 520 L568.1 511.1 L572.2 511.7 L576.4 468.1 L580.6 474.2 L584.7 479.7 L588.9 491.7 L593.3 476.9 L597.5 475 L601.7 481.1 L605.8 490.8 L610 499.2 L614.2 483.6 L618.3 484.7 L622.5 493.1 L626.7 500.6 L630 506.9 L635 514.4 L639.4 515.3 L643.6 501.4 L647.8 503.3 L651.9 509.4 L656.1 515.3 L660.3 515.8 L664.4 519.4 L668.6 523.3 L672.8 526.7 L676.9 529.4 L681.1 531.9 L685.6 534.4 L689.7 523.6 L693.9 526.9 L698.1 529.7 L702.2 532.2 L706.4 521.4 L710.6 507.8 L714.7 508.9 L718.9 509.7 L723.1 515.3 L727.2 515.8 L731.7 520.3 L735.8 510.3 L740 489.4 L744.2 484.4 L748.3 480.3 L752.5 481.1 L756.7 482.5 L760.8 483.3 L765 447.8 L769.2 435.3 L773.3 452.5 L777.5 445 L781.7 438.1 L785.8 437.2 L790 435.3 L794.2 445.8 L798.3 458.3 L802.5 470 L806.7 481.1 L810.8 491.4 L815 500.6 L819.4 509.4 L823.6 472.2 L827.8 478.3 L832.2 478.3 L832.2 483.6 L827.8 483.3 L823.6 473.3 L819.4 509.4 L815 500.6 L810.8 491.4 L806.7 481.1 L802.5 470 L798.3 458.3 L794.2 445.8 L790 435.3 L785.8 437.2 L781.7 438.1 L777.5 445 L773.3 452.5 L769.2 435.3 L765 447.8 L760.8 478.3 L756.7 481.4 L752.5 481.1 L748.3 484.4 L744.2 488.6 L740 489.4 L735.8 510.3 L731.7 520.3 L727.2 515.8 L723.1 515.3 L718.9 509.7 L714.7 508.9 L710.6 507.8 L706.4 521.4 L702.2 532.2 L698.1 529.7 L693.9 526.9 L689.7 523.6 L685.6 534.4 L681.1 531.9 L676.9 529.4 L672.8 526.7 L668.6 523.3 L664.4 519.4 L660.3 515.8 L656.1 515.3 L651.9 509.4 L647.8 503.3 L643.6 501.4 L639.4 515.3 L635 514.4 L630 506.9 L626.7 500.6 L622.5 493.1 L618.3 484.7 L614.2 483.6 L610 495.6 L605.8 486.7 L601.7 480.6 L597.5 483.3 L593.3 472.8 L588.9 486.7 L584.7 478.9 L580.6 470 L576.4 486.1 L572.2 514.4 L568.1 523.3 L563.9 520 L559.7 517.8 L555.6 515 L551.4 529.7 L547.2 522.8 L542.8 517.2 L538.6 511.7 L534.4 508.9 L530.3 501.9 L526.1 494.2 L521.9 490 L517.8 495.6 L513.6 508.3 L509.4 512.2 L505 506.4 L500.8 529.4 L496.7 532.5 L492.5 530 L488.3 526.9 L484.2 523.3 L480 519.2 L475.8 514.4 L471.7 509.4 L467.5 506.4 L463.3 510.8 L459.2 505 L455 513.6 Z" fill="url(#hatch)" fill-rule="evenodd"/>
<line x1="455" y1="574.6" x2="832.2" y2="574.6" stroke="rgba(30,50,80,0.07)" stroke-width="1"/><line x1="455" y1="545.6" x2="832.2" y2="545.6" stroke="rgba(30,50,80,0.07)" stroke-width="1"/><line x1="455" y1="516.6" x2="832.2" y2="516.6" stroke="rgba(30,50,80,0.07)" stroke-width="1"/><line x1="455" y1="487.5" x2="832.2" y2="487.5" stroke="rgba(30,50,80,0.07)" stroke-width="1"/><line x1="455" y1="458.5" x2="832.2" y2="458.5" stroke="rgba(30,50,80,0.07)" stroke-width="1"/><line x1="455" y1="429.5" x2="832.2" y2="429.5" stroke="rgba(30,50,80,0.07)" stroke-width="1"/><line x1="455" y1="400.4" x2="832.2" y2="400.4" stroke="rgba(30,50,80,0.07)" stroke-width="1"/>
<path d="M455 513.6 L459.2 505 L463.3 510.8 L467.5 506.4 L471.7 509.4 L475.8 514.4 L480 519.2 L484.2 523.3 L488.3 526.9 L492.5 530 L496.7 532.5 L500.8 529.4 L505 506.4 L509.4 512.2 L513.6 508.3 L517.8 495.6 L521.9 490 L526.1 494.2 L530.3 501.9 L534.4 508.9 L538.6 511.7 L542.8 517.2 L547.2 522.8 L551.4 529.7 L555.6 515 L559.7 517.8 L563.9 520 L568.1 523.3 L572.2 514.4 L576.4 486.1 L580.6 470 L584.7 478.9 L588.9 486.7 L593.3 472.8 L597.5 483.3 L601.7 480.6 L605.8 486.7 L610 495.6 L614.2 483.6 L618.3 484.7 L622.5 493.1 L626.7 500.6 L630 506.9 L635 514.4 L639.4 515.3 L643.6 501.4 L647.8 503.3 L651.9 509.4 L656.1 515.3 L660.3 515.8 L664.4 519.4 L668.6 523.3 L672.8 526.7 L676.9 529.4 L681.1 531.9 L685.6 534.4 L689.7 523.6 L693.9 526.9 L698.1 529.7 L702.2 532.2 L706.4 521.4 L710.6 507.8 L714.7 508.9 L718.9 509.7 L723.1 515.3 L727.2 515.8 L731.7 520.3 L735.8 510.3 L740 489.4 L744.2 488.6 L748.3 484.4 L752.5 481.1 L756.7 481.4 L760.8 478.3 L765 447.8 L769.2 435.3 L773.3 452.5 L777.5 445 L781.7 438.1 L785.8 437.2 L790 435.3 L794.2 445.8 L798.3 458.3 L802.5 470 L806.7 481.1 L810.8 491.4 L815 500.6 L819.4 509.4 L823.6 473.3 L827.8 483.3 L832.2 483.6" fill="none" stroke="#c2a8e7" stroke-width="0.8" stroke-linejoin="round"/>
<path d="M455 513.6 L459.2 505 L463.3 510.8 L467.5 507.5 L471.7 509.4 L475.8 514.4 L480 519.2 L484.2 523.3 L488.3 526.9 L492.5 530 L496.7 532.5 L500.8 529.4 L505 506.4 L509.4 512.2 L513.6 508.3 L517.8 495.6 L521.9 490 L526.1 494.2 L530.3 501.9 L534.4 508.9 L538.6 513.9 L542.8 518.6 L547.2 523.3 L551.4 522.2 L555.6 515.8 L559.7 519.4 L563.9 520 L568.1 511.1 L572.2 511.7 L576.4 468.1 L580.6 474.2 L584.7 479.7 L588.9 491.7 L593.3 476.9 L597.5 475 L601.7 481.1 L605.8 490.8 L610 499.2 L614.2 483.6 L618.3 484.7 L622.5 493.1 L626.7 500.6 L630 506.9 L635 514.4 L639.4 515.3 L643.6 501.4 L647.8 503.3 L651.9 509.4 L656.1 515.3 L660.3 515.8 L664.4 519.4 L668.6 523.3 L672.8 526.7 L676.9 529.4 L681.1 531.9 L685.6 534.4 L689.7 523.6 L693.9 526.9 L698.1 529.7 L702.2 532.2 L706.4 521.4 L710.6 507.8 L714.7 508.9 L718.9 509.7 L723.1 515.3 L727.2 515.8 L731.7 520.3 L735.8 510.3 L740 489.4 L744.2 484.4 L748.3 480.3 L752.5 481.1 L756.7 482.5 L760.8 483.3 L765 447.8 L769.2 435.3 L773.3 452.5 L777.5 445 L781.7 438.1 L785.8 437.2 L790 435.3 L794.2 445.8 L798.3 458.3 L802.5 470 L806.7 481.1 L810.8 491.4 L815 500.6 L819.4 509.4 L823.6 472.2 L827.8 478.3 L832.2 478.3" fill="none" stroke="#96d4db" stroke-width="0.9" stroke-linejoin="round"/>
<path d="M455 400.4 V603.6 H832.2" fill="none" stroke="#bcc8d6" stroke-width="1"/><line x1="452.3" y1="603.6" x2="455" y2="603.6" stroke="#bcc8d6" stroke-width="1"/><text x="450.4" y="606.4" text-anchor="end">0.00</text><line x1="452.3" y1="574.6" x2="455" y2="574.6" stroke="#bcc8d6" stroke-width="1"/><text x="450.4" y="577.4" text-anchor="end">0.50</text><line x1="452.3" y1="545.6" x2="455" y2="545.6" stroke="#bcc8d6" stroke-width="1"/><text x="450.4" y="548.4" text-anchor="end">1.00</text><line x1="452.3" y1="516.6" x2="455" y2="516.6" stroke="#bcc8d6" stroke-width="1"/><text x="450.4" y="519.4" text-anchor="end">1.50</text><line x1="452.3" y1="487.5" x2="455" y2="487.5" stroke="#bcc8d6" stroke-width="1"/><text x="450.4" y="490.2" text-anchor="end">2.00</text><line x1="452.3" y1="458.5" x2="455" y2="458.5" stroke="#bcc8d6" stroke-width="1"/><text x="450.4" y="461.2" text-anchor="end">2.50</text><line x1="452.3" y1="429.5" x2="455" y2="429.5" stroke="#bcc8d6" stroke-width="1"/><text x="450.4" y="432.2" text-anchor="end">3.00</text><line x1="452.3" y1="400.4" x2="455" y2="400.4" stroke="#bcc8d6" stroke-width="1"/><text x="450.4" y="403.1" text-anchor="end">3.50</text><line x1="480" y1="603.6" x2="480" y2="606.6" stroke="#bcc8d6" stroke-width="1"/><text x="480" y="614.1" text-anchor="middle">17:40:00</text><line x1="605.6" y1="603.6" x2="605.6" y2="606.6" stroke="#bcc8d6" stroke-width="1"/><text x="605.6" y="614.1" text-anchor="middle">17:45:00</text><line x1="731.7" y1="603.6" x2="731.7" y2="606.6" stroke="#bcc8d6" stroke-width="1"/><text x="731.7" y="614.1" text-anchor="middle">17:50:00</text><line x1="832.2" y1="603.6" x2="832.2" y2="606.6" stroke="#bcc8d6" stroke-width="1"/><text x="832.2" y="614.1" text-anchor="middle">17:54:00</text>
<path d="M893.3 434.1 L1256.7 433.4 L1256.7 603.7 L893.3 603.7 Z" fill="#dff2f6"/>
<line x1="893.3" y1="569.8" x2="1256.7" y2="569.8" stroke="rgba(30,50,80,0.07)" stroke-width="1"/><line x1="893.3" y1="535.9" x2="1256.7" y2="535.9" stroke="rgba(30,50,80,0.07)" stroke-width="1"/><line x1="893.3" y1="502" x2="1256.7" y2="502" stroke="rgba(30,50,80,0.07)" stroke-width="1"/><line x1="893.3" y1="468.1" x2="1256.7" y2="468.1" stroke="rgba(30,50,80,0.07)" stroke-width="1"/><line x1="893.3" y1="434.3" x2="1256.7" y2="434.3" stroke="rgba(30,50,80,0.07)" stroke-width="1"/><line x1="893.3" y1="400.5" x2="1256.7" y2="400.5" stroke="rgba(30,50,80,0.07)" stroke-width="1"/>
<path d="M893.3 434.1 L1256.7 433.4" fill="none" stroke="#96d4db" stroke-width="1"/>
<path d="M893.3 400.5 V603.7 H1256.7" fill="none" stroke="#bcc8d6" stroke-width="1"/><line x1="890.6" y1="603.7" x2="893.3" y2="603.7" stroke="#bcc8d6" stroke-width="1"/><text x="888.7" y="606.5" text-anchor="end">0.00B</text><line x1="890.6" y1="569.8" x2="893.3" y2="569.8" stroke="#bcc8d6" stroke-width="1"/><text x="888.7" y="572.5" text-anchor="end">2.79GB</text><line x1="890.6" y1="535.9" x2="893.3" y2="535.9" stroke="#bcc8d6" stroke-width="1"/><text x="888.7" y="538.6" text-anchor="end">5.59GB</text><line x1="890.6" y1="502" x2="893.3" y2="502" stroke="#bcc8d6" stroke-width="1"/><text x="888.7" y="504.8" text-anchor="end">8.38GB</text><line x1="890.6" y1="468.1" x2="893.3" y2="468.1" stroke="#bcc8d6" stroke-width="1"/><text x="888.7" y="470.9" text-anchor="end">11.18GB</text><line x1="890.6" y1="434.3" x2="893.3" y2="434.3" stroke="#bcc8d6" stroke-width="1"/><text x="888.7" y="437.1" text-anchor="end">13.97GB</text><line x1="890.6" y1="400.5" x2="893.3" y2="400.5" stroke="#bcc8d6" stroke-width="1"/><text x="888.7" y="403.2" text-anchor="end">16.76GB</text><line x1="917.3" y1="603.7" x2="917.3" y2="606.7" stroke="#bcc8d6" stroke-width="1"/><text x="917.3" y="614.2" text-anchor="middle">17:40:00</text><line x1="1038.5" y1="603.7" x2="1038.5" y2="606.7" stroke="#bcc8d6" stroke-width="1"/><text x="1038.5" y="614.2" text-anchor="middle">17:45:00</text><line x1="1159.6" y1="603.7" x2="1159.6" y2="606.7" stroke="#bcc8d6" stroke-width="1"/><text x="1159.6" y="614.2" text-anchor="middle">17:50:00</text><line x1="1256.7" y1="603.7" x2="1256.7" y2="606.7" stroke="#bcc8d6" stroke-width="1"/><text x="1256.7" y="614.2" text-anchor="middle">17:54:00</text>
</g></svg>
<div class="abs" style="left:0;top:23px;width:1px;height:697px;background:#bfc2c4;"></div>
<div class="abs" style="left:1279px;top:23px;width:1px;height:697px;background:#ccd1d6;"></div>
<div class="abs" style="left:0;top:719px;width:1280px;height:1px;background:#f3dcdc;"></div>
</div>
</body>
</html>
